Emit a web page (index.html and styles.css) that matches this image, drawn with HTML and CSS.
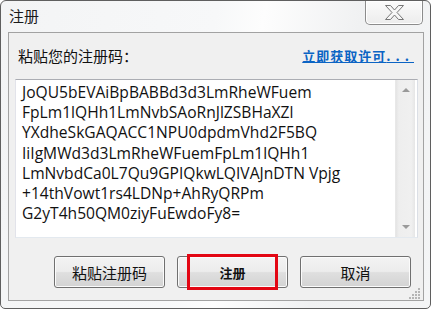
FILE: index.html
```html
<!DOCTYPE html>
<html>
<head>
<meta charset="utf-8">
<link rel="stylesheet" href="styles.css">
</head>
<body>
<div class="window">
  <div class="titlebar">
    <span class="title">注册</span>
    <div class="close">
      <svg width="19" height="15" viewBox="0 0 19 15"><polygon points="0.5,0.5 5.5,0.5 9.5,5 13.5,0.5 18.5,0.5 12,7.5 18.5,14.5 13.5,14.5 9.5,10 5.5,14.5 0.5,14.5 7,7.5" fill="#f7f7f7" stroke="#767676" stroke-width="1" stroke-linejoin="round"/></svg>
    </div>
  </div>
  <div class="client">
    <div class="label-row">
      <span class="label">粘贴您的注册码：</span>
      <a class="link">立即获取许可<span class="dots">...</span></a>
    </div>
    <div class="textbox">
      <div class="text">
        <div class="line">JoQU5bEVAiBpBABBd3d3LmRheWFuem</div>
        <div class="line">FpLm1lQHh1LmNvbSAoRnJlZSBHaXZl</div>
        <div class="line">YXdheSkGAQACC1NPU0dpdmVhd2F5BQ</div>
        <div class="line">IiIgMWd3d3LmRheWFuemFpLm1lQHh1</div>
        <div class="line">LmNvbdCa0L7Qu9GPIQkwLQIVAJnDTN Vpjg</div>
        <div class="line">+14thVowt1rs4LDNp+AhRyQRPm</div>
        <div class="line">G2yT4h50QM0ziyFuEwdoFy8=</div>
      </div>
      <div class="scrollbar">
        <div class="arrow up"></div>
        <div class="track"></div>
        <div class="arrow down"></div>
      </div>
    </div>
    <div class="buttons">
      <div class="btn">粘贴注册码</div>
      <div class="btn primary">注册<span class="mark"></span></div>
      <div class="btn">取消</div>
    </div>
    <svg class="grip" width="12" height="12" viewBox="0 0 12 12">
      <rect x="9" y="1" width="2" height="2" fill="#b5b5b5"/>
      <rect x="6" y="4" width="2" height="2" fill="#b5b5b5"/>
      <rect x="9" y="4" width="2" height="2" fill="#b5b5b5"/>
      <rect x="3" y="7" width="2" height="2" fill="#b5b5b5"/>
      <rect x="6" y="7" width="2" height="2" fill="#b5b5b5"/>
      <rect x="9" y="7" width="2" height="2" fill="#b5b5b5"/>
      <rect x="0" y="10" width="2" height="2" fill="#b5b5b5"/>
      <rect x="3" y="10" width="2" height="2" fill="#b5b5b5"/>
      <rect x="6" y="10" width="2" height="2" fill="#b5b5b5"/>
      <rect x="9" y="10" width="2" height="2" fill="#b5b5b5"/>
    </svg>
  </div>
</div>
</body>
</html>
```

FILE: styles.css
```css
html, body {
  margin: 0;
  padding: 0;
  background: #ffffff;
}

.window {
  box-sizing: border-box;
  width: 431px;
  height: 309px;
  border: 1px solid #5f5f5f;
  border-radius: 6px 6px 5px 5px;
  background: linear-gradient(100deg, #f3f4f5 0%, #f7f8f9 45%, #fdfdfd 55%, #f0f1f2 75%, #f4f5f6 100%);
  padding: 0 6px 7px 7px;
  display: flex;
  flex-direction: column;
  font-family: "Noto Sans CJK SC", sans-serif;
}

.titlebar {
  height: 31px;
  display: flex;
  justify-content: space-between;
  align-items: flex-start;
}

.title {
  margin-top: 5px;
  margin-left: 1px;
  font-size: 15px;
  line-height: 20px;
  color: #1a1a1a;
}

.close {
  box-sizing: border-box;
  width: 58px;
  height: 24px;
  border: 1px solid #8c8c8c;
  border-top: none;
  border-radius: 0 0 5px 5px;
  background: linear-gradient(#fbfbfb, #ececec);
  box-shadow: inset 0 0 0 1px #ffffff;
  display: flex;
  align-items: center;
  justify-content: center;
  margin-right: 1px;
}

.close svg {
  display: block;
  margin-top: -1px;
}

.client {
  position: relative;
  flex: 1;
  border: 1px solid #a2a2a2;
  background: #f0f0f0;
  display: flex;
  flex-direction: column;
}

.label-row {
  height: 46px;
  display: flex;
  align-items: center;
  justify-content: space-between;
  padding: 0 9px 0 9px;
}

.label {
  font-size: 15px;
  color: #111;
  line-height: 20px;
}

.link {
  font-size: 13px;
  font-weight: bold;
  color: #0b64c4;
  text-decoration: underline;
  line-height: 18px;
  letter-spacing: 1px;
}

.dots {
  letter-spacing: 5px;
}

.textbox {
  box-sizing: border-box;
  height: 159px;
  margin: 0 5px 0 6px;
  border: 1px solid #abadb3;
  border-color: #abadb3 #dbdfe6 #e3e9ef #e2e3ea;
  background: #ffffff;
  display: flex;
}

.text {
  flex: 1;
  padding: 2px 0 0 6px;
  font-family: "Open Sans", sans-serif;
  font-size: 15.6px;
  line-height: 20.2px;
  color: #111;
  white-space: nowrap;
  overflow: hidden;
}

.scrollbar {
  width: 19px;
  margin-right: 2px;
  display: flex;
  flex-direction: column;
  background: linear-gradient(90deg, #e4e4e4 0%, #eeeeee 15%, #f0f0f0 80%, #e6e6e6 100%);
  border-left: 1px solid #e8e8e8;
}

.arrow {
  height: 20px;
  display: flex;
  align-items: center;
  justify-content: center;
}

.arrow::before {
  content: "";
  width: 0;
  height: 0;
  border-left: 4px solid transparent;
  border-right: 4px solid transparent;
}

.arrow.up::before {
  border-bottom: 4px solid #9a9a9a;
}

.arrow.down::before {
  border-top: 4px solid #9a9a9a;
}

.track {
  flex: 1;
}

.buttons {
  display: flex;
  gap: 12px;
  margin: 18px 0 0 45px;
}

.btn {
  position: relative;
  box-sizing: border-box;
  width: 111px;
  height: 32px;
  border: 1px solid #707070;
  border-radius: 3px;
  background: linear-gradient(#f3f3f3 0%, #ececec 48%, #dfdfdf 52%, #d3d3d3 100%);
  box-shadow: inset 0 0 0 1px #fbfbfb;
  display: flex;
  align-items: center;
  justify-content: center;
  font-size: 15px;
  color: #111;
}

.btn.primary {
  font-size: 13px;
  font-weight: bold;
}

.mark {
  position: absolute;
  left: 9px;
  top: -3px;
  width: 91px;
  height: 36px;
  box-sizing: border-box;
  border: 3px solid #e30613;
}

.grip {
  position: absolute;
  right: 2px;
  bottom: 1px;
}
```
